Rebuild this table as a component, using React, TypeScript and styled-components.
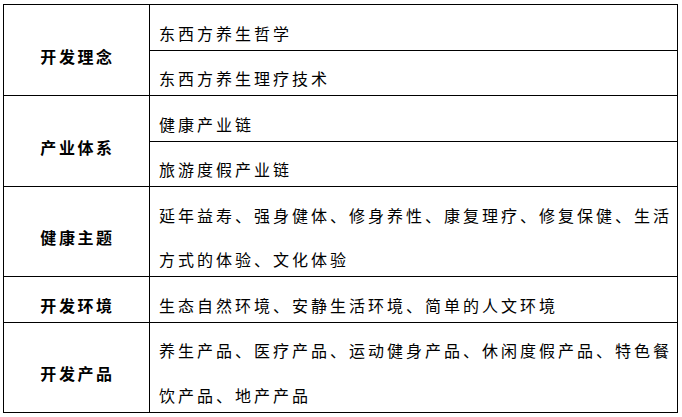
import styled, { createGlobalStyle } from "styled-components";

type Section = {
  title: string;
  items: string[];
};

const sections: Section[] = [
  { title: "开发理念", items: ["东西方养生哲学", "东西方养生理疗技术"] },
  { title: "产业体系", items: ["健康产业链", "旅游度假产业链"] },
  {
    title: "健康主题",
    items: ["延年益寿、强身健体、修身养性、康复理疗、修复保健、生活方式的体验、文化体验"],
  },
  { title: "开发环境", items: ["生态自然环境、安静生活环境、简单的人文环境"] },
  {
    title: "开发产品",
    items: ["养生产品、医疗产品、运动健身产品、休闲度假产品、特色餐饮产品、地产产品"],
  },
];

export default function App() {
  return (
    <>
      <GlobalStyle />
      <Table>
        {sections.map((section) => (
          <Row key={section.title}>
            <Head>{section.title}</Head>
            <Items>
              {section.items.map((item) => (
                <Item key={item}>
                  <Text>{item}</Text>
                </Item>
              ))}
            </Items>
          </Row>
        ))}
      </Table>
    </>
  );
}

const GlobalStyle = createGlobalStyle`
  html, body {
    margin: 0;
    padding: 0;
    background: #ffffff;
  }
  body {
    font-family: "Noto Sans CJK SC", "Noto Sans", sans-serif;
    color: #000000;
  }
`;

const Table = styled.div`
  display: flex;
  flex-direction: column;
  width: 675px;
  margin: 4px 0 0 3px;
  border-top: 1px solid #000;
  border-left: 1px solid #000;
  box-sizing: border-box;
`;

const Row = styled.div`
  display: grid;
  grid-template-columns: 146px 1fr;
`;

const Head = styled.div`
  display: flex;
  align-items: center;
  justify-content: center;
  padding: 11px 0 0 2px;
  border-right: 1px solid #000;
  border-bottom: 1px solid #000;
  font-size: 16px;
  font-weight: 700;
  letter-spacing: 2.6px;
`;

const Items = styled.div`
  display: flex;
  flex-direction: column;
`;

const Item = styled.div`
  padding: 5.5px 0 0 9px;
  border-right: 1px solid #000;
  border-bottom: 1px solid #000;
  font-size: 16px;
  line-height: 44.5px;
  letter-spacing: 3px;
`;

const Text = styled.div`
  margin-bottom: -5.5px;
`;
